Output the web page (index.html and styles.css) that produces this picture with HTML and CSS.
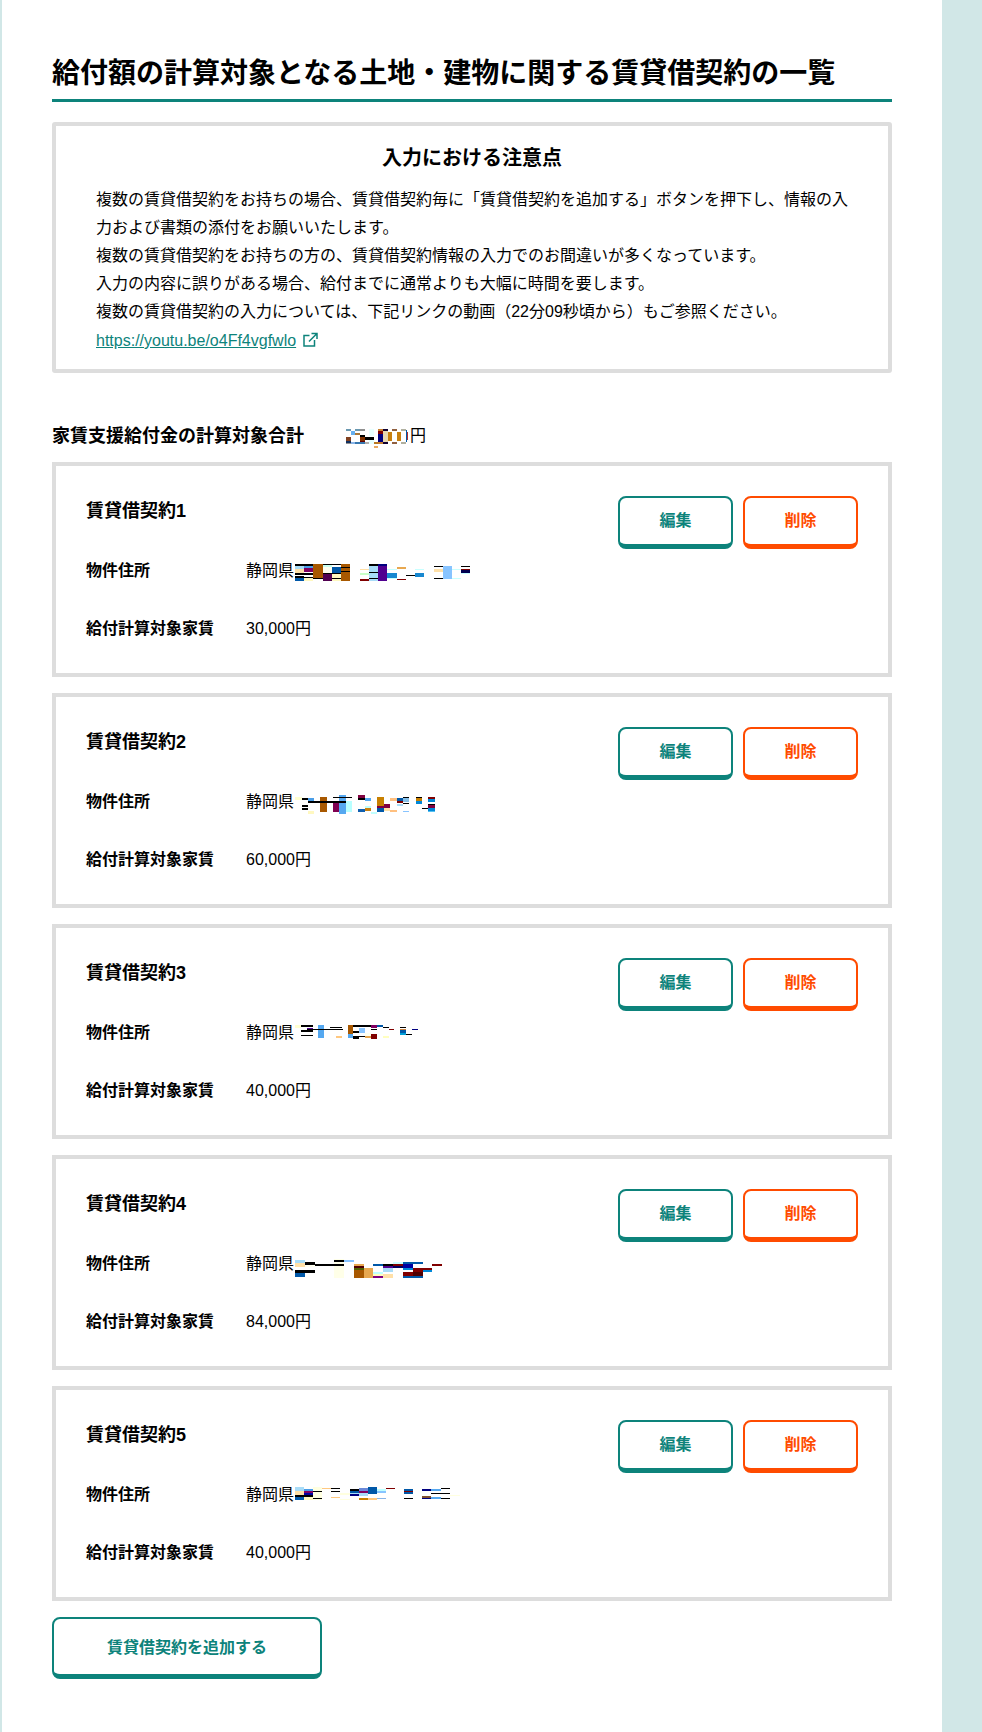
FILE: index.html
```html
<!DOCTYPE html>
<html lang="ja">
<head>
<meta charset="utf-8">
<title>賃貸借契約の一覧</title>
<link rel="stylesheet" href="styles.css">
</head>
<body>
<main class="page">
  <h1 class="page-title">給付額の計算対象となる土地・建物に関する賃貸借契約の一覧</h1>

  <section class="notice">
    <h2 class="notice-title">入力における注意点</h2>
    <p class="notice-text">複数の賃貸借契約をお持ちの場合、賃貸借契約毎に「賃貸借契約を追加する」ボタンを押下し、情報の入力および書類の添付をお願いいたします。<br>複数の賃貸借契約をお持ちの方の、賃貸借契約情報の入力でのお間違いが多くなっています。<br>入力の内容に誤りがある場合、給付までに通常よりも大幅に時間を要します。<br>複数の賃貸借契約の入力については、下記リンクの動画（22分09秒頃から）もご参照ください。</p>
    <div class="notice-linkline"><a class="notice-link" href="#">https://youtu.be/o4Ff4vgfwlo</a><svg class="ext-icon" width="16" height="16" viewBox="0 0 16 16"><path d="M7.5 3.5H2v10.500h10.500V8M9.500 1.500h5.500v5.500M15 1.500L7 9.500" fill="none" stroke="#0d837b" stroke-width="1.500"/></svg></div>
  </section>

  <div class="total">
    <span class="total-label">家賃支援給付金の計算対象合計</span>
    <span class="total-value">
      <svg class="mosaic" width="64" height="28" viewBox="0 -7 64 28">
        <rect x="0" y="0" width="5" height="2" fill="#6a98b0"/><rect x="0" y="8" width="5" height="4" fill="#804020"/><rect x="0" y="12" width="5" height="2" fill="#103060"/><rect x="0" y="14" width="5" height="1" fill="#909090"/>
        <rect x="5" y="2" width="4" height="4" fill="#66b0f0"/><rect x="5" y="13" width="4" height="2" fill="#88b4e8"/>
        <rect x="9" y="0" width="5" height="2" fill="#6a98b0"/><rect x="9" y="4" width="5" height="2" fill="#a87838"/><rect x="9" y="13" width="5" height="2" fill="#3878b0"/>
        <rect x="14" y="0" width="5" height="2" fill="#909090"/><rect x="14" y="6" width="5" height="2" fill="#000"/><rect x="14" y="8" width="5" height="4" fill="#803000"/><rect x="14" y="12" width="5" height="1" fill="#600000"/><rect x="14" y="13" width="5" height="2" fill="#3878b0"/>
        <rect x="19" y="8" width="4" height="3" fill="#000"/><rect x="19" y="13" width="4" height="2" fill="#b0b0b0"/>
        <rect x="23" y="0" width="5" height="7" fill="#e8ffff"/><rect x="23" y="8" width="5" height="3" fill="#000"/><rect x="23" y="11" width="5" height="4" fill="#e8ffff"/>
        <rect x="28" y="13" width="4" height="2" fill="#b87820"/><rect x="28" y="17" width="4" height="2" fill="#e8a860"/>
        <rect x="32" y="0" width="5" height="2" fill="#c88030"/><rect x="32" y="2" width="5" height="3" fill="#800000"/><rect x="32" y="5" width="5" height="8" fill="#000080"/><rect x="32" y="13" width="5" height="2" fill="#c88030"/>
        <rect x="37" y="0" width="5" height="2" fill="#100030"/><rect x="37" y="2" width="5" height="11" fill="#e8d8b0"/><rect x="37" y="13" width="5" height="2" fill="#100030"/>
        <rect x="42" y="3" width="4" height="9" fill="#c88010"/>
        <rect x="46" y="0" width="5" height="2" fill="#906040"/><rect x="46" y="13" width="5" height="2" fill="#906040"/>
        <rect x="51" y="3" width="4" height="9" fill="#c88010"/>
        <rect x="55" y="0" width="5" height="2" fill="#b0b0a0"/><rect x="55" y="13" width="5" height="2" fill="#b0b0a0"/>
        <rect x="60" y="1" width="1" height="12" fill="#0058a8"/><rect x="61" y="3" width="1" height="8" fill="#b03030"/>
      </svg>円
    </span>
  </div>

  <article class="card">
    <div class="card-head">
      <h3 class="card-title">賃貸借契約1</h3>
      <div class="card-actions"><button class="btn btn-teal">編集</button><button class="btn btn-orange">削除</button></div>
    </div>
    <div class="row"><span class="row-label">物件住所</span><span class="row-value">静岡県
      <svg class="mosaic addr" width="180" height="28" viewBox="0 -7 180 28">
        <rect x="0" y="0" width="9" height="2" fill="#000"/><rect x="0" y="2" width="9" height="3" fill="#a8dcf8"/><rect x="0" y="5" width="9" height="4" fill="#ffe0a8"/><rect x="0" y="9" width="18" height="2" fill="#000"/><rect x="0" y="12" width="9" height="2" fill="#000"/><rect x="0" y="14" width="9" height="3" fill="#0058a8"/>
        <rect x="9" y="0" width="9" height="2" fill="#000"/><rect x="9" y="2" width="9" height="2" fill="#4a9ee8"/><rect x="9" y="4" width="9" height="4" fill="#800060"/><rect x="9" y="13" width="9" height="1" fill="#000"/><rect x="9" y="14" width="9" height="3" fill="#fff8c0"/>
        <rect x="18" y="0" width="10" height="14" fill="#a85800"/><rect x="18" y="14" width="10" height="1" fill="#000"/>
        <rect x="28" y="0" width="18" height="1" fill="#000"/><rect x="28" y="1" width="9" height="2" fill="#c8fff0"/><rect x="28" y="3" width="9" height="6" fill="#fffff0"/><rect x="28" y="9" width="18" height="1" fill="#000"/><rect x="28" y="10" width="9" height="7" fill="#500050"/>
        <rect x="37" y="3" width="9" height="6" fill="#0058a8"/><rect x="37" y="10" width="9" height="4" fill="#fff8c0"/><rect x="37" y="14" width="9" height="1" fill="#000"/><rect x="37" y="15" width="9" height="2" fill="#fff8c0"/>
        <rect x="46" y="0" width="9" height="17" fill="#a85800"/><rect x="46" y="3" width="9" height="1" fill="#000"/><rect x="46" y="7" width="9" height="1" fill="#000"/>
        <rect x="65" y="5" width="9" height="1" fill="#ffe0a8"/><rect x="65" y="9" width="9" height="2" fill="#c8ffc8"/><rect x="65" y="15" width="9" height="2" fill="#800000"/>
        <rect x="74" y="0" width="9" height="2" fill="#000"/><rect x="74" y="2" width="9" height="15" fill="#a8dcf8"/><rect x="74" y="8" width="9" height="1" fill="#000"/><rect x="74" y="14" width="9" height="1" fill="#000"/>
        <rect x="83" y="0" width="9" height="2" fill="#000080"/><rect x="83" y="2" width="9" height="15" fill="#500090"/>
        <rect x="92" y="5" width="10" height="1" fill="#c8ffff"/><rect x="92" y="9" width="10" height="5" fill="#1888d0"/><rect x="92" y="14" width="10" height="1" fill="#c8ffff"/>
        <rect x="102" y="3" width="9" height="2" fill="#e8a850"/><rect x="102" y="15" width="9" height="1" fill="#800000"/><rect x="111" y="11" width="9" height="1" fill="#000"/>
        <rect x="120" y="5" width="9" height="1" fill="#c8ffff"/><rect x="120" y="9" width="9" height="4" fill="#1888d0"/>
        <rect x="139" y="2" width="9" height="1" fill="#000"/><rect x="139" y="5" width="9" height="3" fill="#ffe0a8"/><rect x="139" y="14" width="9" height="1" fill="#000"/>
        <rect x="148" y="2" width="9" height="13" fill="#88c4ff"/><rect x="157" y="5" width="9" height="1" fill="#c8ffff"/><rect x="157" y="14" width="9" height="1" fill="#c8ffff"/>
        <rect x="166" y="2" width="9" height="1" fill="#000"/><rect x="166" y="5" width="9" height="1" fill="#800000"/><rect x="166" y="6" width="9" height="3" fill="#000050"/><rect x="166" y="9" width="9" height="1" fill="#c8ffff"/>
      </svg></span></div>
    <div class="row"><span class="row-label">給付計算対象家賃</span><span class="row-value">30,000円</span></div>
  </article>

  <article class="card">
    <div class="card-head">
      <h3 class="card-title">賃貸借契約2</h3>
      <div class="card-actions"><button class="btn btn-teal">編集</button><button class="btn btn-orange">削除</button></div>
    </div>
    <div class="row"><span class="row-label">物件住所</span><span class="row-value">静岡県
      <svg class="mosaic addr" width="180" height="28" viewBox="0 -7 180 28">
        <rect x="0" y="2" width="7" height="3" fill="#ffffd0"/>
        <rect x="7" y="3" width="6" height="2" fill="#000"/><rect x="7" y="10" width="6" height="2" fill="#000"/><rect x="7" y="13" width="6" height="2" fill="#000"/>
        <rect x="13" y="3" width="6" height="3" fill="#4a9ee8"/><rect x="13" y="16" width="6" height="3" fill="#fff8c0"/>
        <rect x="25" y="2" width="7" height="15" fill="#a85800"/>
        <rect x="38" y="6" width="6" height="11" fill="#800050"/><rect x="44" y="0" width="7" height="19" fill="#55a8f0"/><rect x="51" y="6" width="6" height="11" fill="#b8ffff"/>
        <rect x="13" y="6" width="38" height="2" fill="#000"/><rect x="38" y="2" width="19" height="1" fill="#000"/>
        <rect x="63" y="0" width="7" height="3" fill="#800040"/><rect x="63" y="3" width="7" height="2" fill="#000"/><rect x="63" y="14" width="7" height="3" fill="#1060b0"/>
        <rect x="70" y="3" width="6" height="3" fill="#55a8f0"/><rect x="70" y="11" width="6" height="2" fill="#c0ffff"/><rect x="70" y="13" width="6" height="3" fill="#c88010"/><rect x="76" y="17" width="6" height="2" fill="#c0ffff"/>
        <rect x="82" y="2" width="7" height="9" fill="#c88000"/><rect x="82" y="11" width="7" height="2" fill="#800040"/><rect x="82" y="13" width="7" height="4" fill="#0058a8"/>
        <rect x="89" y="9" width="6" height="4" fill="#800040"/><rect x="89" y="13" width="6" height="3" fill="#ffe0a8"/>
        <rect x="95" y="3" width="7" height="3" fill="#ffc080"/><rect x="95" y="15" width="7" height="2" fill="#ffc080"/>
        <rect x="102" y="3" width="6" height="3" fill="#0058a8"/><rect x="102" y="6" width="6" height="2" fill="#800000"/><rect x="102" y="9" width="6" height="2" fill="#a8dcf8"/>
        <rect x="108" y="2" width="6" height="1" fill="#000"/><rect x="108" y="3" width="6" height="4" fill="#88c0e8"/><rect x="108" y="8" width="6" height="1" fill="#000"/><rect x="108" y="16" width="6" height="1" fill="#88c4ff"/>
        <rect x="121" y="2" width="6" height="1" fill="#000"/><rect x="121" y="3" width="6" height="3" fill="#c88000"/><rect x="121" y="6" width="6" height="3" fill="#0088d8"/>
        <rect x="127" y="13" width="6" height="1" fill="#000"/>
        <rect x="133" y="2" width="7" height="2" fill="#800000"/><rect x="133" y="4" width="7" height="3" fill="#0088d8"/><rect x="133" y="9" width="7" height="1" fill="#000"/><rect x="133" y="10" width="7" height="3" fill="#800040"/><rect x="133" y="13" width="7" height="3" fill="#0088d8"/><rect x="133" y="16" width="7" height="1" fill="#55c0f0"/>
      </svg></span></div>
    <div class="row"><span class="row-label">給付計算対象家賃</span><span class="row-value">60,000円</span></div>
  </article>

  <article class="card">
    <div class="card-head">
      <h3 class="card-title">賃貸借契約3</h3>
      <div class="card-actions"><button class="btn btn-teal">編集</button><button class="btn btn-orange">削除</button></div>
    </div>
    <div class="row"><span class="row-label">物件住所</span><span class="row-value">静岡県
      <svg class="mosaic addr" width="180" height="28" viewBox="0 -6 180 28">
        <rect x="0" y="0" width="6" height="3" fill="#ffffd0"/>
        <rect x="6" y="0" width="12" height="2" fill="#000"/><rect x="6" y="5" width="12" height="2" fill="#000"/><rect x="6" y="10" width="12" height="1" fill="#000"/>
        <rect x="12" y="3" width="6" height="2" fill="#500090"/><rect x="23" y="0" width="6" height="13" fill="#55a8f0"/><rect x="12" y="4" width="36" height="1" fill="#000"/>
        <rect x="35" y="2" width="12" height="1" fill="#000"/><rect x="41" y="11" width="6" height="2" fill="#ffc880"/>
        <rect x="53" y="0" width="5" height="9" fill="#a85800"/><rect x="53" y="9" width="5" height="4" fill="#55a8f0"/>
        <rect x="58" y="0" width="24" height="2" fill="#000"/><rect x="58" y="6" width="6" height="2" fill="#000"/><rect x="58" y="11" width="6" height="3" fill="#000"/>
        <rect x="64" y="3" width="6" height="5" fill="#88c4ff"/><rect x="64" y="11" width="6" height="1" fill="#000"/><rect x="70" y="8" width="6" height="3" fill="#fffff0"/><rect x="70" y="11" width="6" height="2" fill="#e8a850"/>
        <rect x="76" y="0" width="6" height="3" fill="#800060"/><rect x="76" y="4" width="6" height="1" fill="#000"/><rect x="76" y="9" width="6" height="5" fill="#800000"/>
        <rect x="82" y="0" width="6" height="2" fill="#0058a8"/><rect x="88" y="2" width="6" height="1" fill="#000"/><rect x="88" y="11" width="6" height="2" fill="#ffffc0"/><rect x="94" y="4" width="5" height="1" fill="#800000"/>
        <rect x="105" y="2" width="6" height="1" fill="#000"/><rect x="105" y="4" width="6" height="1" fill="#c88040"/><rect x="105" y="5" width="6" height="3" fill="#0058a8"/><rect x="105" y="8" width="6" height="2" fill="#00a0d8"/>
        <rect x="111" y="9" width="6" height="1" fill="#000"/><rect x="117" y="4" width="6" height="1" fill="#000080"/>
      </svg></span></div>
    <div class="row"><span class="row-label">給付計算対象家賃</span><span class="row-value">40,000円</span></div>
  </article>

  <article class="card">
    <div class="card-head">
      <h3 class="card-title">賃貸借契約4</h3>
      <div class="card-actions"><button class="btn btn-teal">編集</button><button class="btn btn-orange">削除</button></div>
    </div>
    <div class="row"><span class="row-label">物件住所</span><span class="row-value">静岡県
      <svg class="mosaic addr" width="180" height="28" viewBox="0 -9 180 28">
        <rect x="0" y="1" width="10" height="3" fill="#a8dcf8"/><rect x="0" y="4" width="10" height="4" fill="#ffe0a8"/><rect x="0" y="11" width="20" height="3" fill="#000"/><rect x="0" y="14" width="10" height="4" fill="#0058a8"/>
        <rect x="10" y="3" width="10" height="3" fill="#000"/><rect x="10" y="6" width="10" height="2" fill="#fffff0"/>
        <rect x="20" y="5" width="19" height="2" fill="#000"/>
        <rect x="39" y="0" width="10" height="19" fill="#ffffe8"/><rect x="39" y="1" width="10" height="2" fill="#000"/><rect x="39" y="5" width="10" height="2" fill="#000"/>
        <rect x="49" y="1" width="10" height="2" fill="#88c4ff"/>
        <rect x="59" y="5" width="10" height="2" fill="#e8a850"/><rect x="59" y="7" width="10" height="2" fill="#500000"/><rect x="59" y="9" width="10" height="2" fill="#506000"/><rect x="59" y="11" width="10" height="8" fill="#a85800"/>
        <rect x="69" y="9" width="9" height="10" fill="#e8a850"/>
        <rect x="78" y="5" width="10" height="2" fill="#0058a8"/><rect x="78" y="13" width="10" height="2" fill="#c0ffff"/><rect x="78" y="15" width="10" height="2" fill="#ffffc0"/><rect x="78" y="17" width="10" height="2" fill="#800080"/>
        <rect x="88" y="5" width="10" height="2" fill="#000"/><rect x="88" y="7" width="10" height="2" fill="#500090"/><rect x="88" y="9" width="10" height="4" fill="#a8dcf8"/><rect x="88" y="15" width="10" height="4" fill="#ffe0a8"/>
        <rect x="98" y="3" width="10" height="2" fill="#c8ffff"/><rect x="98" y="5" width="10" height="2" fill="#800000"/><rect x="98" y="7" width="10" height="2" fill="#000060"/>
        <rect x="108" y="3" width="10" height="2" fill="#0058a8"/><rect x="108" y="5" width="10" height="4" fill="#0000a0"/><rect x="108" y="9" width="10" height="2" fill="#0088d8"/><rect x="108" y="13" width="10" height="4" fill="#800000"/><rect x="108" y="17" width="10" height="2" fill="#0058a8"/>
        <rect x="118" y="3" width="10" height="2" fill="#0058a8"/><rect x="118" y="9" width="10" height="4" fill="#800000"/><rect x="118" y="13" width="10" height="4" fill="#500000"/><rect x="118" y="17" width="10" height="2" fill="#0058a8"/>
        <rect x="128" y="9" width="9" height="2" fill="#800000"/><rect x="128" y="11" width="9" height="2" fill="#0088d8"/><rect x="137" y="5" width="10" height="2" fill="#800000"/>
      </svg></span></div>
    <div class="row"><span class="row-label">給付計算対象家賃</span><span class="row-value">84,000円</span></div>
  </article>

  <article class="card">
    <div class="card-head">
      <h3 class="card-title">賃貸借契約5</h3>
      <div class="card-actions"><button class="btn btn-teal">編集</button><button class="btn btn-orange">削除</button></div>
    </div>
    <div class="row"><span class="row-label">物件住所</span><span class="row-value">静岡県
      <svg class="mosaic addr" width="180" height="28" viewBox="0 -6 180 28">
        <rect x="0" y="0" width="9" height="4" fill="#a8dcf8"/><rect x="0" y="4" width="9" height="4" fill="#ffe0a8"/><rect x="0" y="8" width="18" height="2" fill="#000"/><rect x="0" y="10" width="9" height="3" fill="#0058a8"/>
        <rect x="9" y="2" width="9" height="2" fill="#4a9ee8"/><rect x="9" y="4" width="9" height="2" fill="#800060"/><rect x="9" y="6" width="9" height="2" fill="#0000a0"/><rect x="9" y="10" width="9" height="3" fill="#fff8c0"/>
        <rect x="18" y="0" width="9" height="13" fill="#ffffe0"/><rect x="18" y="4" width="9" height="1" fill="#000"/><rect x="18" y="11" width="9" height="1" fill="#000"/>
        <rect x="27" y="1" width="9" height="1" fill="#ffc880"/>
        <rect x="36" y="1" width="9" height="1" fill="#000"/><rect x="36" y="4" width="9" height="1" fill="#000"/><rect x="36" y="10" width="9" height="1" fill="#ffc880"/>
        <rect x="45" y="6" width="10" height="2" fill="#ffffe0"/><rect x="45" y="12" width="10" height="1" fill="#ffffe0"/>
        <rect x="55" y="2" width="9" height="2" fill="#000"/><rect x="55" y="4" width="9" height="2" fill="#0058a8"/><rect x="55" y="6" width="9" height="1" fill="#a8dcf8"/><rect x="55" y="7" width="9" height="2" fill="#000080"/>
        <rect x="64" y="1" width="9" height="3" fill="#6a88d8"/><rect x="64" y="4" width="9" height="2" fill="#800060"/><rect x="64" y="6" width="9" height="3" fill="#a8dcf8"/><rect x="64" y="11" width="9" height="2" fill="#c88000"/>
        <rect x="73" y="0" width="9" height="7" fill="#0058a8"/><rect x="73" y="11" width="9" height="2" fill="#ffc880"/>
        <rect x="82" y="2" width="9" height="2" fill="#c0ffff"/><rect x="82" y="4" width="9" height="2" fill="#88c4ff"/><rect x="82" y="11" width="9" height="1" fill="#88b4e8"/>
        <rect x="91" y="1" width="9" height="1" fill="#800000"/>
        <rect x="109" y="2" width="9" height="2" fill="#0058a8"/><rect x="109" y="4" width="9" height="1" fill="#800000"/><rect x="109" y="5" width="9" height="2" fill="#0058a8"/><rect x="109" y="11" width="9" height="1" fill="#000"/>
        <rect x="127" y="2" width="9" height="2" fill="#000080"/><rect x="127" y="9" width="9" height="2" fill="#805030"/><rect x="127" y="11" width="9" height="1" fill="#000080"/>
        <rect x="136" y="2" width="10" height="2" fill="#55a8f0"/><rect x="136" y="6" width="10" height="1" fill="#000"/><rect x="136" y="10" width="10" height="2" fill="#55a8f0"/>
        <rect x="146" y="1" width="9" height="1" fill="#000"/><rect x="146" y="6" width="9" height="1" fill="#000"/><rect x="146" y="11" width="9" height="1" fill="#000"/>
        <rect x="155" y="8" width="10" height="1" fill="#ffffe0"/>
      </svg></span></div>
    <div class="row"><span class="row-label">給付計算対象家賃</span><span class="row-value">40,000円</span></div>
  </article>

  <button class="btn btn-teal btn-add">賃貸借契約を追加する</button>
</main>
</body>
</html>
```
FILE: styles.css
```css
* { box-sizing: border-box; }
html, body { margin: 0; padding: 0; }
body {
  background: #d1e7e7;
  color: #000;
  font-family: "Liberation Sans", "Noto Sans CJK JP", sans-serif;
  font-size: 16px;
  line-height: 28px;
}
.page {
  margin: 0 40px 0 2px;
  padding: 52px 50px 53px;
  background: #fff;
  height: 1732px;
}
.page-title {
  margin: 0 0 20px;
  padding-bottom: 3px;
  border-bottom: 3px solid #0d837b;
  font-size: 28px;
  line-height: 44px;
  font-weight: 700;
}
.notice {
  border: 4px solid #ddd;
  border-radius: 3px;
  padding: 18px 40px 14px;
}
.notice-title {
  margin: 0 0 14px;
  font-size: 20px;
  line-height: 28px;
  font-weight: 700;
  text-align: center;
}
.notice-text { margin: 0; }
.notice-linkline { margin-top: 1px; }
.notice-link { color: #0d837b; text-decoration: underline; }
.ext-icon { margin-left: 6px; vertical-align: -2px; }
.total {
  display: flex;
  gap: 42px;
  margin: 49px 0 12px;
  height: 28px;
}
.total-label { font-size: 18px; font-weight: 700; }
.total-value { display: flex; }
.mosaic { display: block; flex: none; shape-rendering: crispEdges; }
.card {
  height: 215px;
  margin-bottom: 16px;
  border: 4px solid #ddd;
  padding: 30px;
}
.card-head {
  display: flex;
  justify-content: space-between;
  margin-bottom: 8px;
}
.card-title {
  margin: 0;
  font-size: 18px;
  line-height: 30px;
  font-weight: 700;
}
.card-actions { display: flex; gap: 10px; }
.btn {
  width: 115px;
  height: 53px;
  padding: 0 0 4px;
  background: #fff;
  border: 2px solid;
  border-bottom-width: 5px;
  border-radius: 8px;
  font-family: inherit;
  font-size: 16px;
  font-weight: 700;
}
.btn-teal { color: #0d837b; border-color: #0d837b; }
.btn-orange { color: #ff4b00; border-color: #ff4b00; }
.btn-add { display: block; width: 270px; height: 62px; padding-bottom: 2px; }
.row { display: flex; margin-bottom: 30px; }
.row:last-child { margin-bottom: 0; }
.row-label { width: 160px; flex: none; font-weight: 700; }
.row-value { display: flex; }
.addr { margin-left: 1px; }
```
